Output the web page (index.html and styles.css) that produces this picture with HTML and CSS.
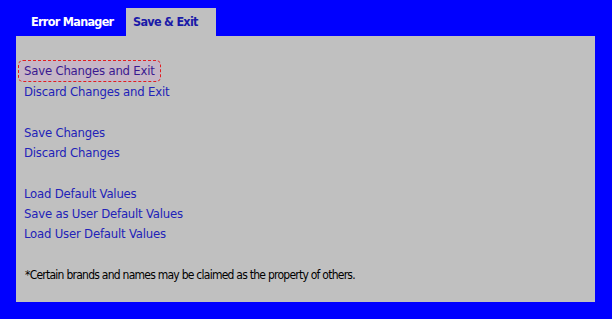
FILE: index.html
```html
<!DOCTYPE html>
<html>
<head>
    <meta charset="UTF-8">
    <title>Save &amp; Exit</title>
    <link rel="stylesheet" href="styles.css">
</head>
<body>
<div class="screen">
    <div class="tabs">
        <div class="tab">Error Manager</div>
        <div class="tab active">Save &amp; Exit</div>
    </div>
    <div class="panel">
        <ul class="group">
            <li class="sel">Save Changes and Exit</li>
            <li>Discard Changes and Exit</li>
        </ul>
        <ul class="group">
            <li>Save Changes</li>
            <li>Discard Changes</li>
        </ul>
        <ul class="group">
            <li>Load Default Values</li>
            <li>Save as User Default Values</li>
            <li>Load User Default Values</li>
        </ul>
        <p class="note">*Certain brands and names may be claimed as the property of others.</p>
    </div>
</div>
</body>
</html>
```

FILE: styles.css
```css
* {
    margin: 0;
    padding: 0;
    box-sizing: border-box;
}

html, body {
    width: 612px;
    height: 319px;
    overflow: hidden;
    background: #0000ff;
}

.screen {
    width: 612px;
    padding: 8px 0 0 16px;
    font-family: "DejaVu Sans Condensed", sans-serif;
    font-size: 13px;
}

.tabs {
    display: flex;
    height: 28px;
}

.tab {
    width: 110px;
    padding-left: 15px;
    line-height: 28px;
    font-size: 12.5px;
    font-weight: bold;
    color: #ffffff;
    letter-spacing: -0.7px;
    white-space: nowrap;
}

.tab.active {
    width: 90px;
    padding-left: 7px;
    background: #c0c0c0;
    color: #1a1aa8;
}

.panel {
    width: 579px;
    height: 266px;
    padding: 24px 0 0 2px;
    background: #c0c0c0;
}

.group {
    list-style: none;
    margin-bottom: 21px;
}

.group li {
    height: 20px;
    line-height: 20px;
    padding-left: 6px;
    color: #2222b8;
    letter-spacing: -0.2px;
}

.group li.sel {
    display: inline-block;
    padding: 0 5px;
    height: 22px;
    line-height: 20px;
    border: 1px dashed #e02020;
    border-radius: 5px;
    background: #c6b6c6;
    color: #3a1890;
}

.note {
    padding-left: 7px;
    line-height: 20px;
    font-size: 12px;
    letter-spacing: -0.75px;
    color: #000000;
}
```
